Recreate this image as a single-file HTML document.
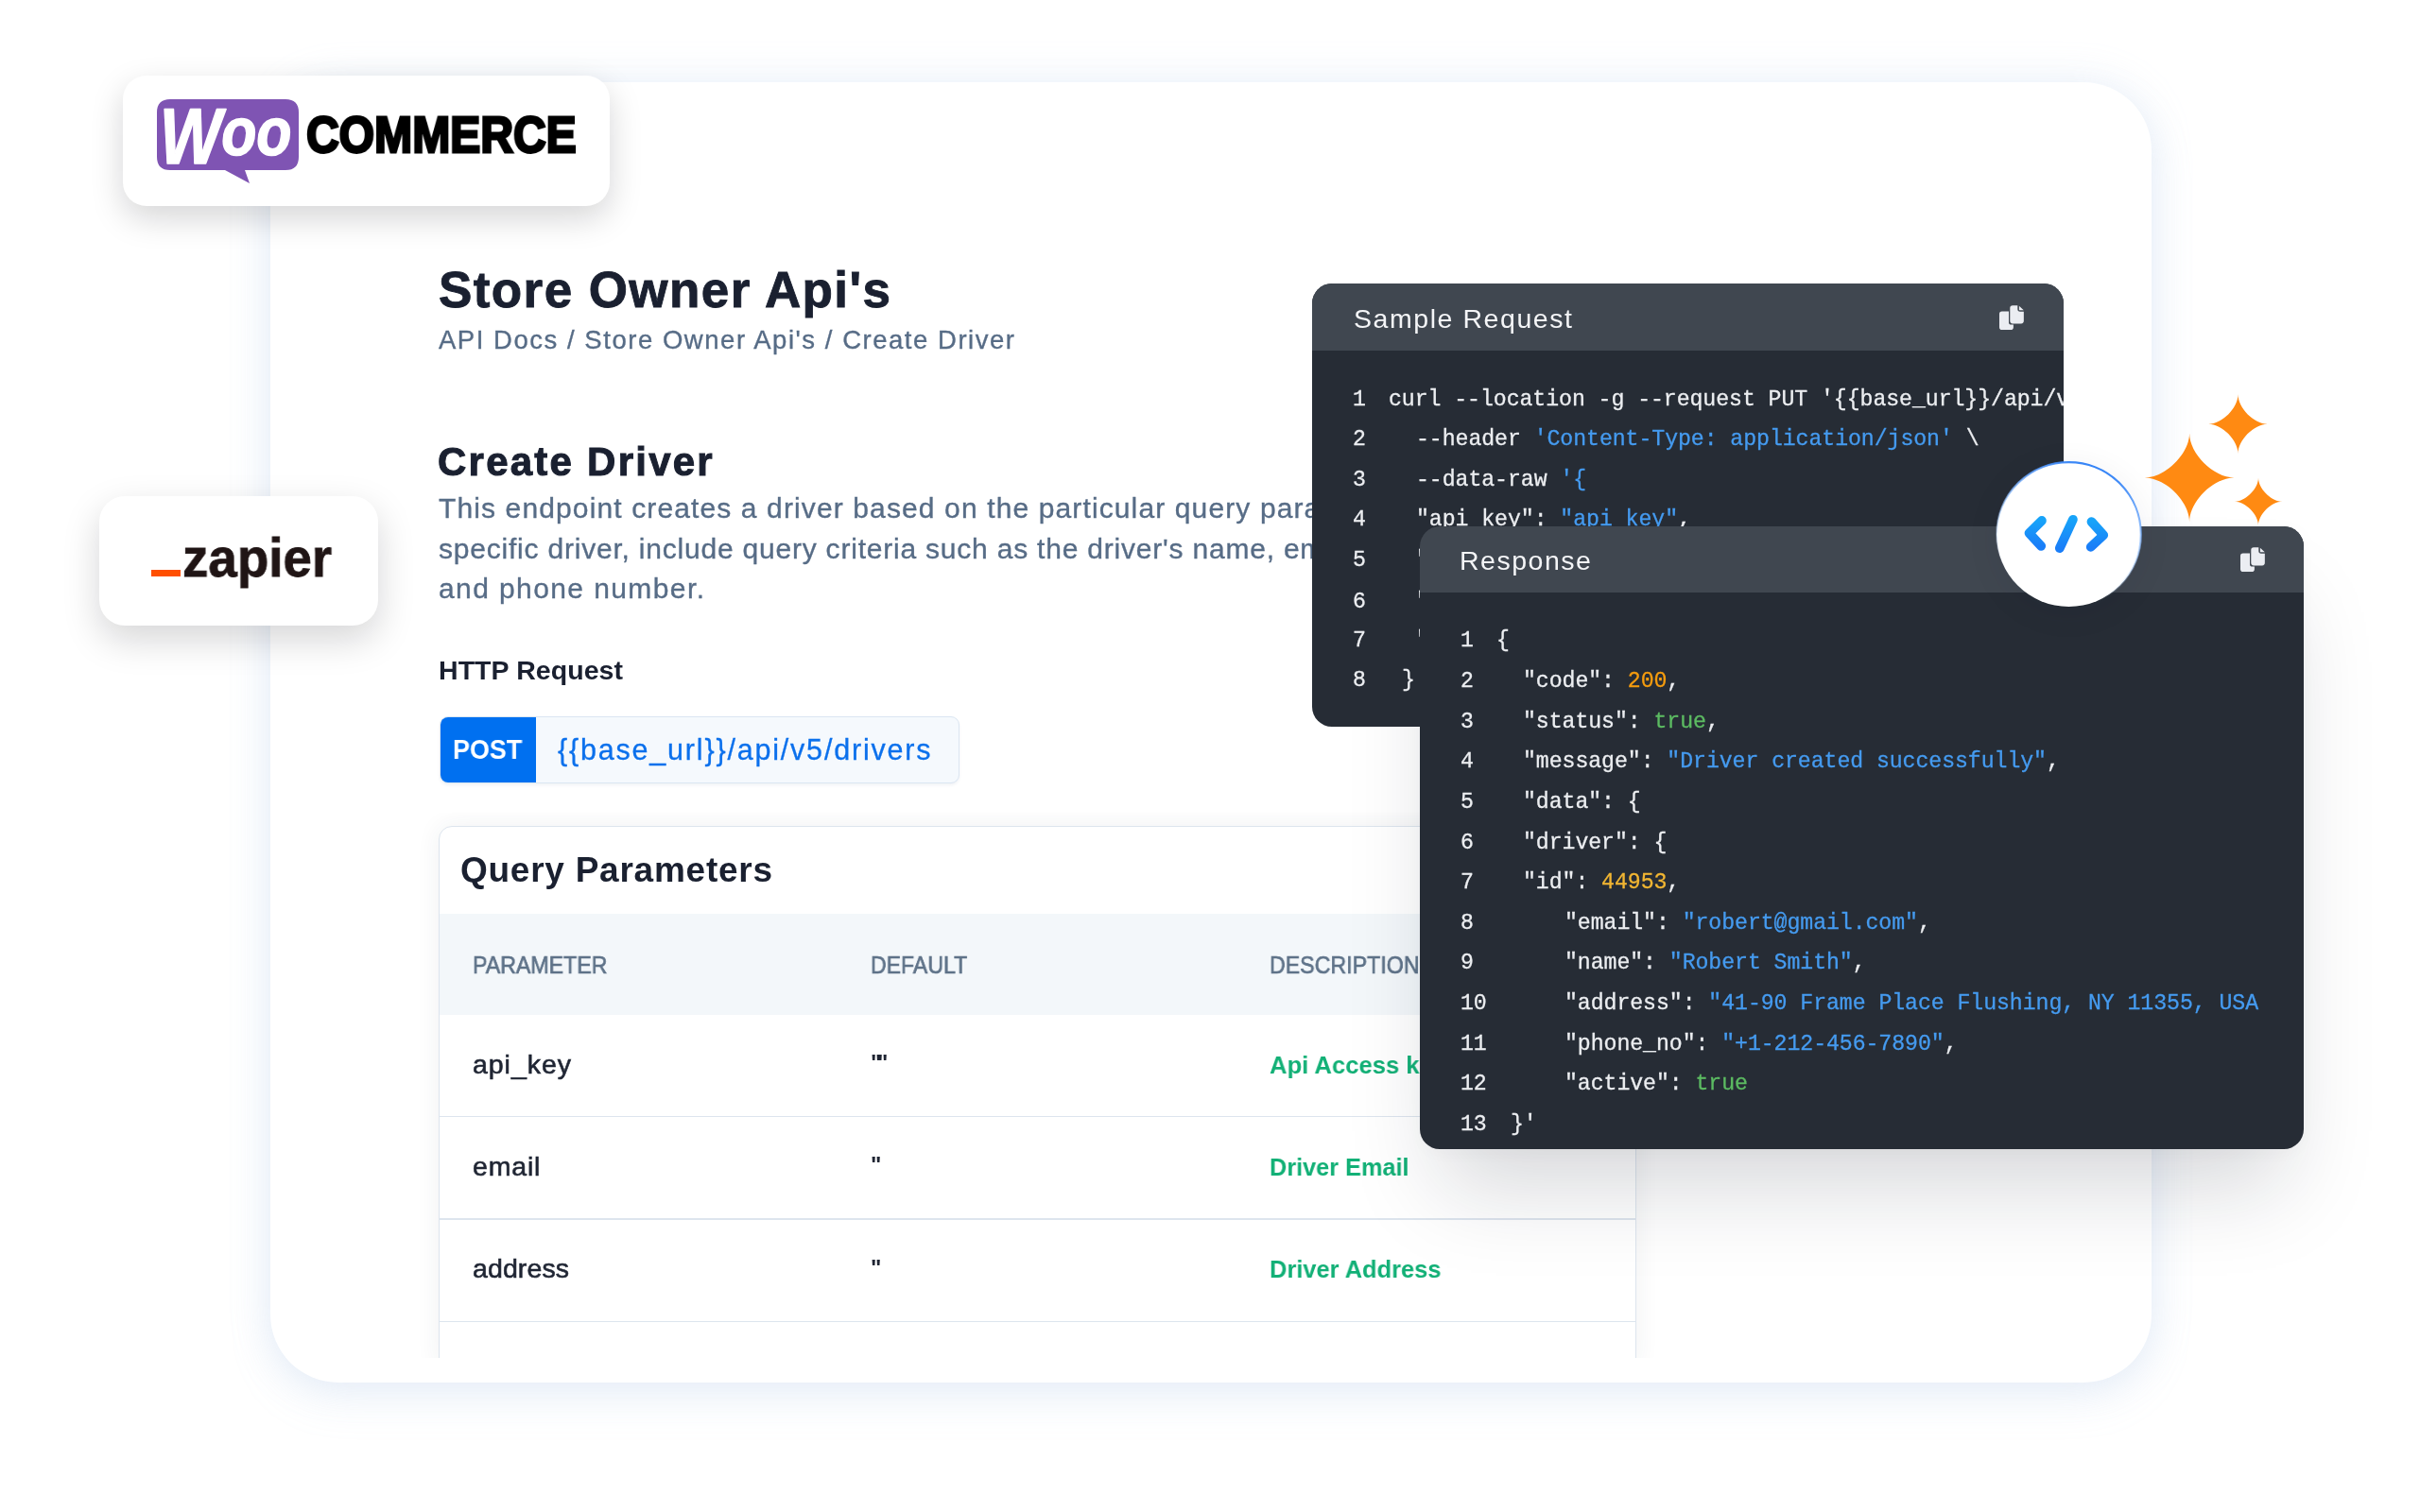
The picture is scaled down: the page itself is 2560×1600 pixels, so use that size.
<!DOCTYPE html>
<html lang="en">
<head>
<meta charset="utf-8">
<title>Store Owner Api's – Create Driver</title>
<style>
html,body{margin:0;padding:0}
body{width:2560px;height:1600px;position:relative;overflow:hidden;background:#fff;font-family:"Liberation Sans",sans-serif}
.abs,.t,.c{position:absolute}
.t,.c{white-space:pre;line-height:1;margin:0;padding:0;will-change:transform}
.c{font-family:"Liberation Mono",monospace;color:#eceef1;-webkit-text-stroke:0.3px}
#main{left:286px;top:87px;width:1990px;height:1375.5px;border-radius:72px;background:#fff;
 box-shadow:0 0 44px rgba(170,194,230,.23),0 18px 46px rgba(170,194,230,.15)}
.logo{background:#fff;z-index:20}
#woo{left:130px;top:80px;width:515px;height:138px;border-radius:25px;box-shadow:0 13px 34px rgba(10,12,20,.17)}
#zapc{left:105px;top:524.5px;width:295px;height:137.5px;border-radius:27px;box-shadow:0 15px 38px rgba(10,12,20,.17)}
#postbox{left:465.4px;top:758.4px;width:547.3px;height:68.6px;border:1.5px solid #dbe6f2;border-radius:9px;background:#f5f9fd;box-shadow:0 2px 3px rgba(120,140,170,.10);overflow:hidden}
#postbox i{position:absolute;left:0;top:0;width:100.5px;height:100%;background:#0070f0;display:block}
#table{left:464px;top:873.5px;width:1265px;height:570px;border:1.5px solid #dde5ee;border-radius:14px 14px 0 0;background:#fff;overflow:hidden;box-shadow:0 0 26px rgba(40,50,70,.07)}
#tclip{left:286px;top:860px;width:1990px;height:576.5px;overflow:hidden}
#thead{left:0;top:92.5px;width:100%;height:107px;background:#f3f7fa}
.hr{left:0;width:100%;height:1.6px;background:#dde5ee}
.card{background:#262c35;border-radius:21px;overflow:hidden}
.card b{position:absolute;left:0;top:0;width:100%;display:block;background:#404750}
#req{left:1388.4px;top:300px;width:794.6px;height:468.6px;z-index:30}
#req b{height:71.3px}
#res{left:1502.3px;top:556.5px;width:935.1px;height:659.4px;z-index:40}
#ressh{left:1502.3px;top:556.5px;width:935.1px;height:659.4px;border-radius:21px;z-index:25;box-shadow:0 62px 90px -22px rgba(15,22,40,.17),0 6px 24px rgba(15,22,40,.03)}
#res b{height:70.3px}
#circle{left:2111.8px;top:489px;width:153px;height:153px;border-radius:50%;background:#fff;z-index:50;box-shadow:0 6px 36px rgba(20,30,60,.07)}
svg{position:absolute;overflow:visible}
</style>
</head>
<body>
<main>
<div id="main" class="abs"></div>
<div id="tclip" class="abs"><div id="table" class="abs" style="left:178px;top:13.5px"><div id="thead" class="abs"></div><div class="abs hr" style="top:306.1px"></div><div class="abs hr" style="top:414.5px"></div><div class="abs hr" style="top:523px"></div></div></div>
<div id="postbox" class="abs"><i></i></div>
<div id="woo" class="abs logo"></div>
<div id="zapc" class="abs logo"></div>
<div class="abs" style="left:160px;top:602.6px;width:30.8px;height:7.8px;background:#ff4f00;z-index:21"></div>
<svg style="left:166px;top:105px;z-index:21" width="150" height="90" viewBox="0 0 150 90"><path d="M14 0H136Q150 0 150 14V61Q150 75 136 75H93L98 89L72 75H14Q0 75 0 61V14Q0 0 14 0Z" fill="#7f54b3"/><text x="3" y="67.5" font-family="Liberation Sans, sans-serif" font-weight="700" font-style="italic" font-size="83" fill="#fff" stroke="#fff" stroke-width="1.6" stroke-linejoin="round" textLength="139.5" lengthAdjust="spacingAndGlyphs">W<tspan font-size="73" dy="-8.5">oo</tspan></text></svg>
<div id="commerce" class="t" style="left:324.4px;top:115.7px;font-size:54.5px;font-weight:700;color:#000;z-index:21;-webkit-text-stroke:2.8px #000;transform-origin:0 0;transform:scaleX(.882)">COMMERCE</div>
<div id="req" class="abs card"><b></b></div>
<div id="ressh" class="abs"></div>
<div id="res" class="abs card"><b></b></div>
<svg style="left:2115.05px;top:322.5px;z-index:31" width="26" height="26.5" viewBox="0 0 26 26.5"><path fill="#ebedf2" d="M2.8 6.5H10V17.9Q10 20.6 12.7 20.6H14.9V23.2Q14.9 26 12.1 26H2.8Q0 26 0 23.2V9.3Q0 6.5 2.8 6.5ZM14.1 .2H19.3V4.1Q19.3 6.75 22 6.75H25.85V16.6Q25.85 19.4 23 19.4H14.1Q11.3 19.4 11.3 16.6V3Q11.3 .2 14.1 .2ZM20.9 .8L25.8 5.3H20.9Z"/></svg>
<svg style="left:2369.75px;top:578.65px;z-index:41" width="26" height="26.5" viewBox="0 0 26 26.5"><path fill="#ebedf2" d="M2.8 6.5H10V17.9Q10 20.6 12.7 20.6H14.9V23.2Q14.9 26 12.1 26H2.8Q0 26 0 23.2V9.3Q0 6.5 2.8 6.5ZM14.1 .2H19.3V4.1Q19.3 6.75 22 6.75H25.85V16.6Q25.85 19.4 23 19.4H14.1Q11.3 19.4 11.3 16.6V3Q11.3 .2 14.1 .2ZM20.9 .8L25.8 5.3H20.9Z"/></svg>
<div id="circle" class="abs"></div>
<svg style="left:2110.8px;top:488px;z-index:51" width="155" height="155" viewBox="0 0 155 155"><defs><linearGradient id="ring" x1="0.68" y1="0" x2="0.36" y2="0.85"><stop offset="0" stop-color="#2a7df6"/><stop offset="0.5" stop-color="#8dbcfb" stop-opacity=".65"/><stop offset="1" stop-color="#dbeafe" stop-opacity="0"/></linearGradient><linearGradient id="ic" x1="0" y1="0" x2="0" y2="1"><stop offset="0" stop-color="#17a3f9"/><stop offset="1" stop-color="#1a7ef8"/></linearGradient></defs><circle cx="77.5" cy="77.5" r="76.3" fill="none" stroke="url(#ring)" stroke-width="2.2"/><g fill="none" stroke="url(#ic)" stroke-width="9.8" stroke-linecap="round" stroke-linejoin="round"><path d="M48.9 62.9L35.5 76.2L48.2 89.8"/><path d="M81.9 61.8L67.8 92.1"/><path d="M101.5 64.1L114.2 78.2L100.8 90.8"/></g></svg>
<svg style="left:0;top:0;z-index:35" width="2560" height="1600" viewBox="0 0 2560 1600"><path fill="#ff8a12" d="M2316.1 458.5C2316.1 480.1 2341.6 505.4 2363.4 505.4C2341.6 505.4 2316.1 530.7 2316.1 552.3C2316.1 530.7 2290.6 505.4 2268.8 505.4C2290.6 505.4 2316.1 480.1 2316.1 458.5ZM2367.5 417.2C2367.5 431.7 2384.3 448.7 2398.7 448.7C2384.3 448.7 2367.5 465.7 2367.5 480.2C2367.5 465.7 2350.7 448.7 2336.3 448.7C2350.7 448.7 2367.5 431.7 2367.5 417.2ZM2389.0 505.5C2389.0 517.1 2402.7 530.8 2414.3 530.8C2402.7 530.8 2389.0 544.5 2389.0 556.1C2389.0 544.5 2375.3 530.8 2363.7 530.8C2375.3 530.8 2389.0 517.1 2389.0 505.5Z"/></svg>
<h1 id="title" class="t" style="left:463.5px;top:280.0px;font-size:53px;font-weight:700;color:#1a2030;letter-spacing:1.416px;-webkit-text-stroke:0.9px #1a2030">Store Owner Api's</h1>
<nav id="crumb" class="t" style="left:464.0px;top:346.0px;font-size:27.5px;font-weight:400;color:#576c86;letter-spacing:1.530px;-webkit-text-stroke:0.35px #576c86">API Docs / Store Owner Api's / Create Driver</nav>
<h2 id="h2" class="t" style="left:462.8px;top:467.6px;font-size:42px;font-weight:700;color:#1a2030;letter-spacing:2.241px;-webkit-text-stroke:1px #1a2030">Create Driver</h2>
<p id="p1" class="t" style="left:464.0px;top:523.0px;font-size:30px;font-weight:400;color:#576c86;letter-spacing:1.122px;-webkit-text-stroke:0.35px #576c86">This endpoint creates a driver based on the particular query parameters. To create a</p>
<p id="p2" class="t" style="left:464.0px;top:565.8px;font-size:30px;font-weight:400;color:#576c86;letter-spacing:0.788px;-webkit-text-stroke:0.35px #576c86">specific driver, include query criteria such as the driver's name, email, address,</p>
<p id="p3" class="t" style="left:464.0px;top:608.0px;font-size:30px;font-weight:400;color:#576c86;letter-spacing:1.403px;-webkit-text-stroke:0.35px #576c86">and phone number.</p>
<h3 id="http" class="t" style="left:463.5px;top:694.5px;font-size:28.5px;font-weight:700;color:#1a2030;letter-spacing:0.067px">HTTP Request</h3>
<div id="post" class="t" style="left:479.0px;top:778.3px;font-size:29.3px;font-weight:700;color:#ffffff;letter-spacing:0.000px;transform-origin:0 50%;transform:scaleX(0.9189)">POST</div>
<div id="url" class="t" style="left:590.0px;top:777.6px;font-size:30.5px;font-weight:400;color:#0b70ec;letter-spacing:1.804px;-webkit-text-stroke:0.3px #0b70ec">{{base_url}}/api/v5/drivers</div>
<h3 id="qp" class="t" style="left:486.5px;top:902.0px;font-size:37px;font-weight:700;color:#1a2030;letter-spacing:0.746px">Query Parameters</h3>
<div id="thp" class="t" style="left:500.0px;top:1008.0px;font-size:26px;font-weight:400;color:#5f7389;letter-spacing:0.000px;-webkit-text-stroke:0.7px #5f7389;transform-origin:0 50%;transform:scaleX(0.8913)">PARAMETER</div>
<div id="thd" class="t" style="left:920.6px;top:1008.0px;font-size:26px;font-weight:400;color:#5f7389;letter-spacing:0.000px;-webkit-text-stroke:0.7px #5f7389;transform-origin:0 50%;transform:scaleX(0.8879)">DEFAULT</div>
<div id="thx" class="t" style="left:1343.0px;top:1008.0px;font-size:26px;font-weight:400;color:#5f7389;letter-spacing:0.000px;-webkit-text-stroke:0.7px #5f7389;transform-origin:0 50%;transform:scaleX(0.8920)">DESCRIPTION</div>
<div id="r1a" class="t" style="left:499.6px;top:1111.8px;font-size:28.5px;font-weight:400;color:#1f2533;letter-spacing:0.961px;-webkit-text-stroke:0.6px #1f2533">api_key</div>
<div id="r2a" class="t" style="left:499.6px;top:1220.0px;font-size:28.5px;font-weight:400;color:#1f2533;letter-spacing:0.823px;-webkit-text-stroke:0.6px #1f2533">email</div>
<div id="r3a" class="t" style="left:499.6px;top:1328.0px;font-size:28.5px;font-weight:400;color:#1f2533;letter-spacing:0.099px;-webkit-text-stroke:0.6px #1f2533">address</div>
<div id="r1c" class="t" style="left:1343.0px;top:1114.0px;font-size:26.5px;font-weight:700;color:#12b076;letter-spacing:0.000px;transform-origin:0 50%;transform:scaleX(0.9665)">Api Access key</div>
<div id="r2c" class="t" style="left:1343.0px;top:1222.4px;font-size:26.5px;font-weight:700;color:#12b076;letter-spacing:0.000px;transform-origin:0 50%;transform:scaleX(0.9536)">Driver Email</div>
<div id="r3c" class="t" style="left:1343.0px;top:1330.0px;font-size:26.5px;font-weight:700;color:#12b076;letter-spacing:0.000px;transform-origin:0 50%;transform:scaleX(0.9602)">Driver Address</div>
<h4 id="sreq" class="t" style="left:1432.0px;top:322.6px;font-size:28.5px;font-weight:400;color:#f4f5f7;letter-spacing:1.561px;z-index:31">Sample Request</h4>
<h4 id="resp" class="t" style="left:1543.6px;top:578.5px;font-size:28.5px;font-weight:400;color:#f4f5f7;letter-spacing:1.508px;z-index:41">Response</h4>
<div id="zap" class="t" style="left:192.8px;top:561.4px;font-size:58px;font-weight:700;color:#201515;letter-spacing:0.000px;z-index:21;-webkit-text-stroke:0.8px #201515;transform-origin:0 50%;transform:scaleX(0.9437)">zapier</div>
<div class="t" style="left:920.5px;top:1112.8px;font-size:24px;font-weight:700;color:#1f2533;letter-spacing:-4.4px">""</div>
<div class="t" style="left:920.5px;top:1221.4px;font-size:24px;font-weight:700;color:#1f2533">"</div>
<div class="t" style="left:920.5px;top:1329.6px;font-size:24px;font-weight:700;color:#1f2533">"</div>
<code class="abs" style="display:block;left:1388.4px;top:371.3px;width:794.6px;height:397.3px;overflow:hidden;z-index:31">
<span class="c" style="left:42.8px;top:40.6px;font-size:23.2px;letter-spacing:-0.066px">1</span>
<span class="c" style="left:80.4px;top:40.6px;font-size:23.2px;letter-spacing:-0.066px">curl --location -g --request PUT '{{base_url}}/api/v5/drivers' \</span>
<span class="c" style="left:42.8px;top:83.1px;font-size:23.2px;letter-spacing:-0.066px">2</span>
<span class="c" style="left:109.8px;top:83.1px;font-size:23.2px;letter-spacing:-0.066px">--header <span style="color:#459bf0">'Content-Type: application/json'</span> \</span>
<span class="c" style="left:42.8px;top:125.7px;font-size:23.2px;letter-spacing:-0.066px">3</span>
<span class="c" style="left:109.8px;top:125.7px;font-size:23.2px;letter-spacing:-0.066px">--data-raw <span style="color:#459bf0">'{</span></span>
<span class="c" style="left:42.8px;top:168.2px;font-size:23.2px;letter-spacing:-0.066px">4</span>
<span class="c" style="left:109.8px;top:168.2px;font-size:23.2px;letter-spacing:-0.066px">"api_key": <span style="color:#459bf0">"api_key"</span>,</span>
<span class="c" style="left:42.8px;top:210.7px;font-size:23.2px;letter-spacing:-0.066px">5</span>
<span class="c" style="left:109.8px;top:210.7px;font-size:23.2px;letter-spacing:-0.066px">"email": <span style="color:#459bf0">"email"</span>,</span>
<span class="c" style="left:42.8px;top:254.7px;font-size:23.2px;letter-spacing:-0.066px">6</span>
<span class="c" style="left:109.8px;top:254.7px;font-size:23.2px;letter-spacing:-0.066px">"address": <span style="color:#459bf0">"address"</span>,</span>
<span class="c" style="left:42.8px;top:295.9px;font-size:23.2px;letter-spacing:-0.066px">7</span>
<span class="c" style="left:109.8px;top:295.9px;font-size:23.2px;letter-spacing:-0.066px">"name": <span style="color:#459bf0">"name"</span></span>
<span class="c" style="left:42.8px;top:338.2px;font-size:23.2px;letter-spacing:-0.066px">8</span>
<span class="c" style="left:94.6px;top:338.2px;font-size:23.2px;letter-spacing:-0.066px">}</span>
</code>
<code class="abs" style="display:block;left:1502.5px;top:627.1px;width:934.9px;height:588.3px;overflow:hidden;z-index:41">
<span class="c" style="left:42.3px;top:40.3px;font-size:23.2px;letter-spacing:-0.066px">1</span>
<span class="c" style="left:80.0px;top:40.3px;font-size:23.2px;letter-spacing:-0.066px">{</span>
<span class="c" style="left:42.3px;top:83.0px;font-size:23.2px;letter-spacing:-0.066px">2</span>
<span class="c" style="left:108.1px;top:83.0px;font-size:23.2px;letter-spacing:-0.066px">"code": <span style="color:#f59c0e">200</span>,</span>
<span class="c" style="left:42.3px;top:125.6px;font-size:23.2px;letter-spacing:-0.066px">3</span>
<span class="c" style="left:108.1px;top:125.6px;font-size:23.2px;letter-spacing:-0.066px">"status": <span style="color:#5cbb62">true</span>,</span>
<span class="c" style="left:42.3px;top:168.3px;font-size:23.2px;letter-spacing:-0.066px">4</span>
<span class="c" style="left:108.1px;top:168.3px;font-size:23.2px;letter-spacing:-0.066px">"message": <span style="color:#459bf0">"Driver created successfully"</span>,</span>
<span class="c" style="left:42.3px;top:210.9px;font-size:23.2px;letter-spacing:-0.066px">5</span>
<span class="c" style="left:108.1px;top:210.9px;font-size:23.2px;letter-spacing:-0.066px">"data": {</span>
<span class="c" style="left:42.3px;top:253.5px;font-size:23.2px;letter-spacing:-0.066px">6</span>
<span class="c" style="left:108.1px;top:253.5px;font-size:23.2px;letter-spacing:-0.066px">"driver": {</span>
<span class="c" style="left:42.3px;top:296.2px;font-size:23.2px;letter-spacing:-0.066px">7</span>
<span class="c" style="left:108.1px;top:296.2px;font-size:23.2px;letter-spacing:-0.066px">"id": <span style="color:#f2b632">44953</span>,</span>
<span class="c" style="left:42.3px;top:338.8px;font-size:23.2px;letter-spacing:-0.066px">8</span>
<span class="c" style="left:152.0px;top:338.8px;font-size:23.2px;letter-spacing:-0.066px">"email": <span style="color:#459bf0">"robert@gmail.com"</span>,</span>
<span class="c" style="left:42.3px;top:381.4px;font-size:23.2px;letter-spacing:-0.066px">9</span>
<span class="c" style="left:152.0px;top:381.4px;font-size:23.2px;letter-spacing:-0.066px">"name": <span style="color:#459bf0">"Robert Smith"</span>,</span>
<span class="c" style="left:42.3px;top:424.1px;font-size:23.2px;letter-spacing:-0.066px">10</span>
<span class="c" style="left:152.0px;top:424.1px;font-size:23.2px;letter-spacing:-0.066px">"address": <span style="color:#459bf0">"41-90 Frame Place Flushing, NY 11355, USA</span></span>
<span class="c" style="left:42.3px;top:466.7px;font-size:23.2px;letter-spacing:-0.066px">11</span>
<span class="c" style="left:152.0px;top:466.7px;font-size:23.2px;letter-spacing:-0.066px">"phone_no": <span style="color:#459bf0">"+1-212-456-7890"</span>,</span>
<span class="c" style="left:42.3px;top:509.4px;font-size:23.2px;letter-spacing:-0.066px">12</span>
<span class="c" style="left:152.0px;top:509.4px;font-size:23.2px;letter-spacing:-0.066px">"active": <span style="color:#5cbb62">true</span></span>
<span class="c" style="left:42.3px;top:552.0px;font-size:23.2px;letter-spacing:-0.066px">13</span>
<span class="c" style="left:95.0px;top:552.0px;font-size:23.2px;letter-spacing:-0.066px">}'</span>
</code>
</main>
</body>
</html>
